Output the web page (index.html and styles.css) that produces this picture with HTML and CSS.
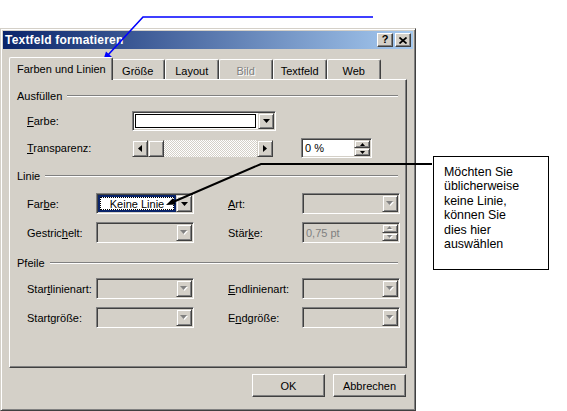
FILE: index.html
```html
<!DOCTYPE html>
<html lang="de">
<head>
<meta charset="utf-8">
<title>Textfeld formatieren</title>
<link rel="stylesheet" href="styles.css">
</head>
<body>
<div class="page">
  <div class="dialog">
    <div class="titlebar">
      <span class="title">Textfeld formatieren</span>
      <div class="caption-btns">
        <span class="cap-btn help">?</span>
        <span class="cap-btn close"><svg width="8" height="7" viewBox="0 0 8 7"><path d="M0.5 0.5L7.5 6.5M7.5 0.5L0.5 6.5" stroke="#000" stroke-width="1.7"/></svg></span>
      </div>
    </div>
    <div class="dlg-body">
      <div class="tabs">
        <span class="tab active">Farben und Linien</span>
        <span class="tab">Größe</span>
        <span class="tab">Layout</span>
        <span class="tab disabled">Bild</span>
        <span class="tab">Textfeld</span>
        <span class="tab">Web</span>
      </div>
      <div class="panel">
        <div class="group-head"><span>Ausfüllen</span><span class="rule"></span></div>
        <div class="fill-row first">
          <span class="fill-label"><u>F</u>arbe:</span>
          <div class="combo color-combo">
            <span class="field"><span class="swatch"></span></span>
            <span class="drop"><svg width="7" height="4" viewBox="0 0 7 4"><path d="M0 0h7L3.5 4z"/></svg></span>
          </div>
        </div>
        <div class="fill-row trans">
          <span class="fill-label"><u>T</u>ransparenz:</span>
          <div class="scrollbar">
            <span class="sb-btn"><svg width="4" height="7" viewBox="0 0 4 7"><path d="M4 0v7L0 3.5z"/></svg></span>
            <span class="sb-btn thumb"></span>
            <span class="sb-track"></span>
            <span class="sb-btn"><svg width="4" height="7" viewBox="0 0 4 7"><path d="M0 0v7L4 3.5z"/></svg></span>
          </div>
          <div class="spin">
            <span class="spin-text">0 %</span>
            <span class="spin-btns">
              <span class="spin-btn"><svg width="5" height="3" viewBox="0 0 5 3"><path d="M0 3h5L2.5 0z"/></svg></span>
              <span class="spin-btn"><svg width="5" height="3" viewBox="0 0 5 3"><path d="M0 0h5L2.5 3z"/></svg></span>
            </span>
          </div>
        </div>

        <div class="group-head second"><span>Linie</span><span class="rule"></span></div>
        <div class="grid">
          <span class="lbl">Far<u>b</u>e:</span>
          <div class="combo focused">
            <span class="field"><span class="sel">Keine Linie</span></span>
            <span class="drop"><svg width="7" height="4" viewBox="0 0 7 4"><path d="M0 0h7L3.5 4z"/></svg></span>
          </div>
          <span></span>
          <span class="lbl"><u>A</u>rt:</span>
          <div class="combo disabled">
            <span class="field"></span>
            <span class="drop"><svg width="8" height="5" viewBox="0 0 8 5"><path d="M1 1h7L4.5 5z" fill="#fff"/><path d="M0 0h7L3.5 4z" fill="#808080"/></svg></span>
          </div>

          <span class="lbl">Gestric<u>h</u>elt:</span>
          <div class="combo disabled">
            <span class="field"></span>
            <span class="drop"><svg width="8" height="5" viewBox="0 0 8 5"><path d="M1 1h7L4.5 5z" fill="#fff"/><path d="M0 0h7L3.5 4z" fill="#808080"/></svg></span>
          </div>
          <span></span>
          <span class="lbl">Stär<u>k</u>e:</span>
          <div class="spin disabled">
            <span class="spin-text">0,75 pt</span>
            <span class="spin-btns">
              <span class="spin-btn"><svg width="6" height="4" viewBox="0 0 6 4"><path d="M1 4h5L3.5 1z" fill="#fff"/><path d="M0 3h5L2.5 0z" fill="#808080"/></svg></span>
              <span class="spin-btn"><svg width="6" height="4" viewBox="0 0 6 4"><path d="M1 1h5L3.5 4z" fill="#fff"/><path d="M0 0h5L2.5 3z" fill="#808080"/></svg></span>
            </span>
          </div>
        </div>

        <div class="group-head third"><span>Pfeile</span><span class="rule"></span></div>
        <div class="grid arrows">
          <span class="lbl">Star<u>t</u>linienart:</span>
          <div class="combo disabled">
            <span class="field"></span>
            <span class="drop"><svg width="8" height="5" viewBox="0 0 8 5"><path d="M1 1h7L4.5 5z" fill="#fff"/><path d="M0 0h7L3.5 4z" fill="#808080"/></svg></span>
          </div>
          <span></span>
          <span class="lbl"><u>E</u>ndlinienart:</span>
          <div class="combo disabled">
            <span class="field"></span>
            <span class="drop"><svg width="8" height="5" viewBox="0 0 8 5"><path d="M1 1h7L4.5 5z" fill="#fff"/><path d="M0 0h7L3.5 4z" fill="#808080"/></svg></span>
          </div>

          <span class="lbl">Start<u>g</u>röße:</span>
          <div class="combo disabled">
            <span class="field"></span>
            <span class="drop"><svg width="8" height="5" viewBox="0 0 8 5"><path d="M1 1h7L4.5 5z" fill="#fff"/><path d="M0 0h7L3.5 4z" fill="#808080"/></svg></span>
          </div>
          <span></span>
          <span class="lbl">E<u>n</u>dgröße:</span>
          <div class="combo disabled">
            <span class="field"></span>
            <span class="drop"><svg width="8" height="5" viewBox="0 0 8 5"><path d="M1 1h7L4.5 5z" fill="#fff"/><path d="M0 0h7L3.5 4z" fill="#808080"/></svg></span>
          </div>
        </div>
      </div>
      <div class="actions">
        <button class="btn">OK</button>
        <button class="btn">Abbrechen</button>
      </div>
    </div>
  </div>

  <svg class="annotations" width="567" height="411" viewBox="0 0 567 411">
    <path d="M373 17H143L108 55" stroke="#0000ff" stroke-width="1.6" fill="none"/>
    <polygon points="103,61 112,57 106,51.6" fill="#0000ff"/>
    <path d="M432 164H261L173 202" stroke="#000" stroke-width="2" fill="none"/>
    <polygon points="166,205 175.7,204.6 172.9,198.2" fill="#000"/>
  </svg>
  <div class="callout">Möchten Sie<br>üblicherweise<br>keine Linie,<br>können Sie<br>dies hier<br>auswählen</div>
</div>
</body>
</html>
```

FILE: styles.css
```css
* { box-sizing: border-box; }
html, body { margin: 0; padding: 0; background: #fff; }
body {
  width: 567px;
  height: 411px;
  overflow: hidden;
  font-family: "Liberation Sans", Arial, sans-serif;
  font-size: 11px;
  color: #000;
}
.page { position: relative; width: 567px; height: 411px; padding-top: 28px; }

.dialog {
  width: 416px;
  height: 383px;
  background: #d4d0c8;
  border: 1px solid;
  border-color: #d4d0c8 #404040 #404040 #d4d0c8;
  box-shadow: inset 1px 1px #fff, inset -1px -1px #808080;
  padding: 2px;
  display: flex;
  flex-direction: column;
}
.titlebar {
  height: 18px;
  flex: none;
  display: flex;
  align-items: center;
  justify-content: space-between;
  padding: 0 2px;
  background: linear-gradient(to right, #0a246a, #a6caf0);
  color: #fff;
}
.title { font-weight: bold; font-size: 12px; letter-spacing: 0.2px; }
.caption-btns { display: flex; gap: 2px; }
.cap-btn {
  width: 16px;
  height: 14px;
  background: #d4d0c8;
  border: 1px solid;
  border-color: #fff #404040 #404040 #fff;
  box-shadow: inset -1px -1px #808080;
  display: flex;
  align-items: center;
  justify-content: center;
  color: #000;
  font-weight: bold;
  font-size: 11px;
  line-height: 1;
}
.cap-btn.help { padding-bottom: 1px; }

.dlg-body {
  flex: 1;
  padding: 8px 6px 0 6px;
  display: flex;
  flex-direction: column;
}
.tabs {
  height: 22px;
  display: flex;
  align-items: flex-end;
  padding-left: 2px;
}
.tab {
  height: 20px;
  min-width: 54px;
  padding: 2px 7px 0;
  display: flex;
  align-items: center;
  justify-content: center;
  border-top: 1px solid #fff;
  border-left: 1px solid #fff;
  border-right: 1px solid #404040;
  box-shadow: inset -1px 0 #808080;
  border-radius: 2px 2px 0 0;
  background: #d4d0c8;
  white-space: nowrap;
}
.tab.active {
  height: 23px;
  margin: 0 -2px -1px;
  padding: 0 6px 1px 7px;
  position: relative;
  z-index: 1;
}
.tab.disabled { color: #808080; text-shadow: 1px 1px #fff; }

.panel {
  height: 289px;
  border-top: 1px solid #fff;
  border-left: 1px solid #fff;
  border-right: 1px solid #404040;
  border-bottom: 1px solid #404040;
  box-shadow: inset -1px -1px #808080;
  padding: 9px 8px 0 7px;
}
.group-head {
  height: 13px;
  display: flex;
  align-items: center;
  gap: 5px;
}
.group-head .rule {
  flex: 1;
  height: 2px;
  border-top: 1px solid #808080;
  border-bottom: 1px solid #fff;
}
.group-head.second { margin-top: 11px; }
.group-head.third { margin-top: 13px; }

.fill-row {
  display: flex;
  align-items: center;
  padding-left: 10px;
  margin-top: 9px;
  height: 20px;
}
.fill-row.trans { margin-top: 7px; }
.fill-label { width: 105px; flex: none; }

.combo {
  display: flex;
  height: 21px;
  border: 1px solid;
  border-color: #808080 #fff #fff #808080;
  box-shadow: inset 1px 1px #404040, inset -1px -1px #d4d0c8;
  padding: 1px;
  background: #fff;
}
.combo.disabled { background: #d4d0c8; }
.combo .field { flex: 1; display: flex; }
.combo .drop {
  width: 16px;
  flex: none;
  background: #d4d0c8;
  border: 1px solid;
  border-color: #d4d0c8 #404040 #404040 #d4d0c8;
  box-shadow: inset 1px 1px #fff, inset -1px -1px #808080;
  display: flex;
  align-items: center;
  justify-content: center;
}
.color-combo { width: 144px; height: 20px; }
.color-combo .swatch { flex: 1; margin: 1px 2px 1px 1px; border: 1px solid #000; background: #fff; }
.combo.focused .field { background: #0a246a; padding: 2px; }
.combo.focused .sel {
  flex: 1;
  background: #fff;
  border: 1px dotted #000;
  display: flex;
  align-items: center;
  justify-content: center;
}

.scrollbar {
  width: 141px;
  height: 17px;
  display: flex;
}
.sb-btn {
  width: 16px;
  flex: none;
  background: #d4d0c8;
  border: 1px solid;
  border-color: #d4d0c8 #404040 #404040 #d4d0c8;
  box-shadow: inset 1px 1px #fff, inset -1px -1px #808080;
  display: flex;
  align-items: center;
  justify-content: center;
}
.sb-track {
  flex: 1;
  background: repeating-conic-gradient(#fff 0 25%, #d4d0c8 0 50%) 0 0 / 2px 2px;
}

.spin {
  display: flex;
  width: 71px;
  height: 20px;
  margin-left: 28px;
  border: 1px solid;
  border-color: #808080 #fff #fff #808080;
  box-shadow: inset 1px 1px #404040, inset -1px -1px #d4d0c8;
  padding: 1px;
  background: #fff;
}
.spin-text { flex: 1; display: flex; align-items: center; padding-left: 2px; }
.spin-btns { width: 16px; display: flex; flex-direction: column; }
.spin-btn {
  flex: 1;
  background: #d4d0c8;
  border: 1px solid;
  border-color: #d4d0c8 #404040 #404040 #d4d0c8;
  box-shadow: inset 1px 1px #fff, inset -1px -1px #808080;
  display: flex;
  align-items: center;
  justify-content: center;
}
.spin.disabled { background: #d4d0c8; margin-left: 0; width: 98px; height: 21px; }
.spin.disabled .spin-text { color: #808080; }

.grid {
  display: grid;
  grid-template-columns: 69px 98px 34px 74px 98px;
  grid-auto-rows: 21px;
  row-gap: 8px;
  align-items: center;
  padding-left: 10px;
  margin-top: 11px;
}
.grid.arrows { margin-top: 9px; }
.grid .combo { width: 98px; }

.actions {
  display: flex;
  justify-content: flex-end;
  gap: 8px;
  margin-top: 6px;
  padding-right: 1px;
}
.btn {
  width: 73px;
  height: 23px;
  font: inherit;
  color: #000;
  background: #d4d0c8;
  border: 1px solid;
  border-color: #fff #404040 #404040 #fff;
  box-shadow: inset -1px -1px #808080;
  padding: 0;
}

.annotations { position: absolute; left: 0; top: 0; pointer-events: none; }
.callout {
  position: absolute;
  left: 433px;
  top: 156px;
  width: 116px;
  height: 114px;
  border: 1px solid #000;
  background: #fff;
  padding: 8px 0 0 10px;
  font-size: 12.4px;
  line-height: 14.4px;
}
```
